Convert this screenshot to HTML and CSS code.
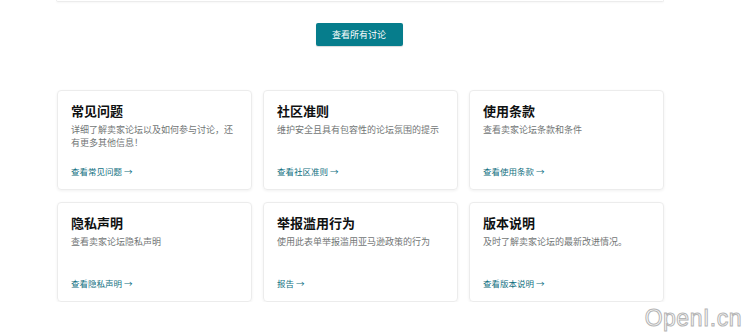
FILE: index.html
```html
<!DOCTYPE html>
<html lang="zh-CN">
<head>
    <meta charset="UTF-8">
    <meta name="viewport" content="width=device-width, initial-scale=1.0">
    <title>卖家论坛</title>
    <link rel="stylesheet" href="styles.css">
</head>
<body>
    <div class="page">
        <div class="top-card"></div>

        <div class="all-section">
            <a class="all-button" href="#">查看所有讨论</a>
        </div>

        <div class="help-grid">
            <div class="help-card">
                <h3>常见问题</h3>
                <p>详细了解卖家论坛以及如何参与讨论，还有更多其他信息！</p>
                <a href="#">查看常见问题 →</a>
            </div>
            <div class="help-card">
                <h3>社区准则</h3>
                <p>维护安全且具有包容性的论坛氛围的提示</p>
                <a href="#">查看社区准则 →</a>
            </div>
            <div class="help-card">
                <h3>使用条款</h3>
                <p>查看卖家论坛条款和条件</p>
                <a href="#">查看使用条款 →</a>
            </div>
            <div class="help-card">
                <h3>隐私声明</h3>
                <p>查看卖家论坛隐私声明</p>
                <a href="#">查看隐私声明 →</a>
            </div>
            <div class="help-card">
                <h3>举报滥用行为</h3>
                <p>使用此表单举报滥用亚马逊政策的行为</p>
                <a href="#">报告 →</a>
            </div>
            <div class="help-card">
                <h3>版本说明</h3>
                <p>及时了解卖家论坛的最新改进情况。</p>
                <a href="#">查看版本说明 →</a>
            </div>
        </div>
    </div>

    <div class="watermark">OpenI.cn</div>
</body>
</html>
```

FILE: styles.css
```css
* {
    margin: 0;
    padding: 0;
    box-sizing: border-box;
    font-family: "Noto Sans CJK SC", "Noto Sans", sans-serif;
}

body {
    background-color: white;
    overflow: hidden;
}

.page {
    width: 608px;
    margin-left: 56px;
}

.top-card {
    height: 2px;
    border: 1px solid #ececec;
    border-top: none;
    border-radius: 0 0 4px 4px;
    box-shadow: 0 1px 2px rgba(0, 0, 0, 0.04);
}

.all-section {
    display: flex;
    justify-content: center;
    margin-top: 21px;
    margin-bottom: 44px;
    padding-right: 2px;
}

.all-button {
    display: flex;
    align-items: center;
    justify-content: center;
    width: 87px;
    height: 23px;
    background-color: #067d8c;
    color: white;
    font-size: 9px;
    text-decoration: none;
    border-radius: 2px;
    box-shadow: 0 1px 1px rgba(0, 0, 0, 0.15);
}

.help-grid {
    display: grid;
    grid-template-columns: repeat(3, 195px);
    column-gap: 11px;
    row-gap: 12px;
    padding-left: 1px;
}

.help-card {
    display: flex;
    flex-direction: column;
    height: 100px;
    padding: 11px 13px 12px 13px;
    border: 1px solid #ececec;
    border-radius: 4px;
    box-shadow: 0 1px 3px rgba(0, 0, 0, 0.06);
}

.help-card h3 {
    font-size: 13px;
    line-height: 18px;
    font-weight: 700;
    color: #0f1111;
    margin-bottom: 3px;
}

.help-card p {
    font-size: 9px;
    line-height: 13px;
    color: #727676;
}

.help-card a {
    margin-top: auto;
    font-size: 8.5px;
    line-height: 12px;
    color: #11707f;
    text-decoration: none;
}

.watermark {
    position: absolute;
    right: 8px;
    bottom: 4px;
    font-family: "Liberation Sans", sans-serif;
    font-size: 23px;
    color: white;
    -webkit-text-stroke: 1px #b5b5b5;
    letter-spacing: 0.5px;
}
```
